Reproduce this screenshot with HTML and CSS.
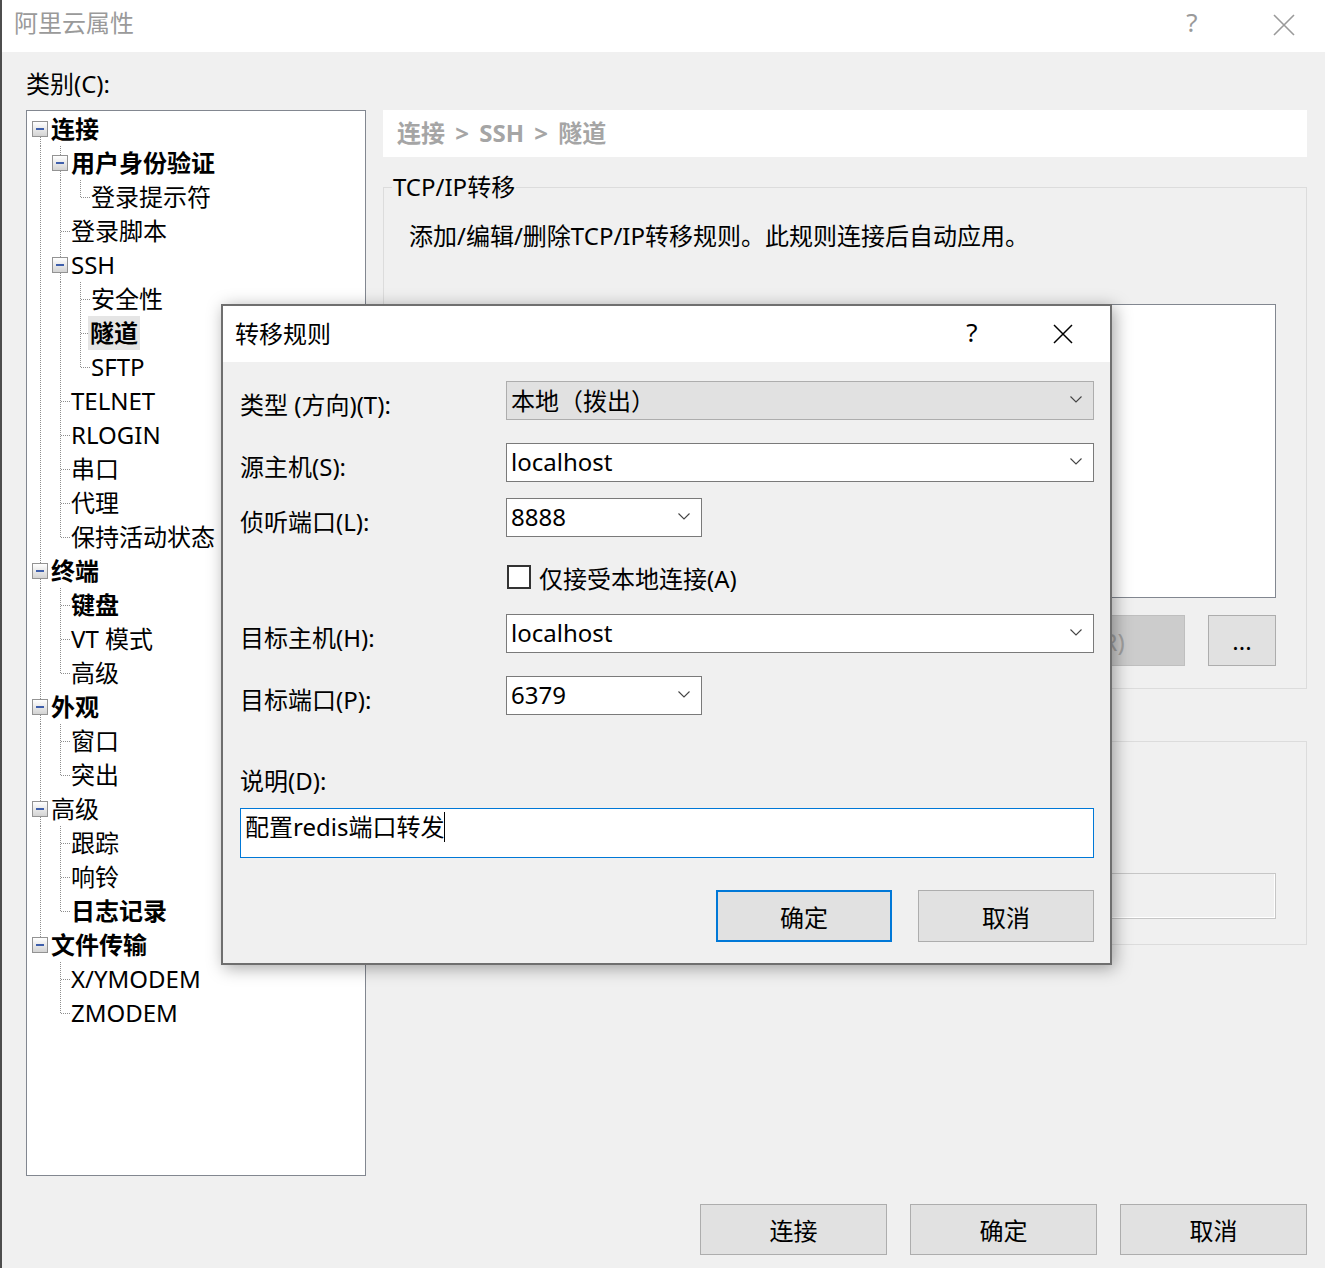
FILE: index.html
```html
<!DOCTYPE html>
<html lang="zh-CN">

<head>
    <meta charset="UTF-8">
    <meta name="viewport" content="width=device-width, initial-scale=1.0">
    <title>阿里云属性</title>
    <link rel="stylesheet" href="styles.css">
</head>

<body>
    <div class="window">
        <div class="titlebar">
            <span class="title">阿里云属性</span>
            <span class="tb-help">?</span>
            <span class="tb-close">
                <svg width="22" height="22" viewBox="0 0 22 22"><path d="M1 1L21 21M21 1L1 21" stroke="#9a9a9a" stroke-width="1.6" fill="none"/></svg>
            </span>
        </div>

        <div class="main">
            <div class="cat-label">类别(C):</div>
            <div class="columns">
                <!-- category tree -->
                <div class="tree">
                    <div class="row"><span class="g down"><i class="exp"></i></span><span class="label b">连接</span></div>
                    <div class="row"><span class="g v"></span><span class="g up down"><i class="exp"></i></span><span class="label b">用户身份验证</span></div>
                    <div class="row"><span class="g v"></span><span class="g v"></span><span class="g l"></span><span class="label">登录提示符</span></div>
                    <div class="row"><span class="g v"></span><span class="g t"></span><span class="label">登录脚本</span></div>
                    <div class="row"><span class="g v"></span><span class="g up down"><i class="exp"></i></span><span class="label">SSH</span></div>
                    <div class="row"><span class="g v"></span><span class="g v"></span><span class="g t"></span><span class="label">安全性</span></div>
                    <div class="row"><span class="g v"></span><span class="g v"></span><span class="g t"></span><span class="label b sel">隧道</span></div>
                    <div class="row"><span class="g v"></span><span class="g v"></span><span class="g l"></span><span class="label">SFTP</span></div>
                    <div class="row"><span class="g v"></span><span class="g t"></span><span class="label">TELNET</span></div>
                    <div class="row"><span class="g v"></span><span class="g t"></span><span class="label">RLOGIN</span></div>
                    <div class="row"><span class="g v"></span><span class="g t"></span><span class="label">串口</span></div>
                    <div class="row"><span class="g v"></span><span class="g t"></span><span class="label">代理</span></div>
                    <div class="row"><span class="g v"></span><span class="g l"></span><span class="label">保持活动状态</span></div>
                    <div class="row"><span class="g up down"><i class="exp"></i></span><span class="label b">终端</span></div>
                    <div class="row"><span class="g v"></span><span class="g t"></span><span class="label b">键盘</span></div>
                    <div class="row"><span class="g v"></span><span class="g t"></span><span class="label">VT 模式</span></div>
                    <div class="row"><span class="g v"></span><span class="g l"></span><span class="label">高级</span></div>
                    <div class="row"><span class="g up down"><i class="exp"></i></span><span class="label b">外观</span></div>
                    <div class="row"><span class="g v"></span><span class="g t"></span><span class="label">窗口</span></div>
                    <div class="row"><span class="g v"></span><span class="g l"></span><span class="label">突出</span></div>
                    <div class="row"><span class="g up down"><i class="exp"></i></span><span class="label">高级</span></div>
                    <div class="row"><span class="g v"></span><span class="g t"></span><span class="label">跟踪</span></div>
                    <div class="row"><span class="g v"></span><span class="g t"></span><span class="label">响铃</span></div>
                    <div class="row"><span class="g v"></span><span class="g l"></span><span class="label b">日志记录</span></div>
                    <div class="row"><span class="g up"><i class="exp"></i></span><span class="label b">文件传输</span></div>
                    <div class="row"><span class="g"></span><span class="g t"></span><span class="label">X/YMODEM</span></div>
                    <div class="row"><span class="g"></span><span class="g l"></span><span class="label">ZMODEM</span></div>
                </div>

                <!-- settings page -->
                <div class="panel">
                    <div class="crumb">连接 &gt; SSH &gt; 隧道</div>

                    <fieldset class="group">
                        <legend>TCP/IP转移</legend>
                        <div class="group-body">
                            <p class="desc">添加/编辑/删除TCP/IP转移规则。此规则连接后自动应用。</p>
                            <div class="listbox"></div>
                            <div class="list-buttons">
                                <button type="button" class="btn">添加(A)</button>
                                <button type="button" class="btn" disabled>编辑(E)</button>
                                <button type="button" class="btn" disabled>删除(R)</button>
                                <button type="button" class="btn btn-more">...</button>
                            </div>
                        </div>
                    </fieldset>

                    <fieldset class="group group-x11">
                        <legend>X11转移</legend>
                        <div class="group-body">
                            <div class="x11-input"></div>
                        </div>
                    </fieldset>
                </div>
            </div>

            <div class="footer">
                <button type="button" class="btn">连接</button>
                <button type="button" class="btn">确定</button>
                <button type="button" class="btn">取消</button>
            </div>
        </div>

        <!-- forwarding rule dialog -->
        <div class="dialog">
            <div class="dlg-title">
                <span class="dlg-name">转移规则</span>
                <span class="dlg-help">?</span>
                <span class="dlg-close">
                    <svg width="20" height="20" viewBox="0 0 20 20"><path d="M1 1L19 19M19 1L1 19" stroke="#000" stroke-width="1.5" fill="none"/></svg>
                </span>
            </div>
            <div class="dlg-body">
                <div class="field">
                    <span class="flabel">类型 (方向)(T):</span>
                    <div class="combo combo-ro"><span>本地（拨出）</span><svg class="chev" width="12" height="7" viewBox="0 0 12 7"><path d="M0.5 0.5L6 6L11.5 0.5" stroke="#444" stroke-width="1.1" fill="none"/></svg></div>
                </div>
                <div class="field">
                    <span class="flabel">源主机(S):</span>
                    <div class="combo"><span>localhost</span><svg class="chev" width="12" height="7" viewBox="0 0 12 7"><path d="M0.5 0.5L6 6L11.5 0.5" stroke="#444" stroke-width="1.1" fill="none"/></svg></div>
                </div>
                <div class="field field-port">
                    <span class="flabel">侦听端口(L):</span>
                    <div class="combo combo-short"><span>8888</span><svg class="chev" width="12" height="7" viewBox="0 0 12 7"><path d="M0.5 0.5L6 6L11.5 0.5" stroke="#444" stroke-width="1.1" fill="none"/></svg></div>
                </div>
                <div class="field field-check">
                    <span class="flabel"></span>
                    <span class="checkbox"></span>
                    <span class="check-text">仅接受本地连接(A)</span>
                </div>
                <div class="field field-after-check">
                    <span class="flabel">目标主机(H):</span>
                    <div class="combo"><span>localhost</span><svg class="chev" width="12" height="7" viewBox="0 0 12 7"><path d="M0.5 0.5L6 6L11.5 0.5" stroke="#444" stroke-width="1.1" fill="none"/></svg></div>
                </div>
                <div class="field">
                    <span class="flabel">目标端口(P):</span>
                    <div class="combo combo-short"><span>6379</span><svg class="chev" width="12" height="7" viewBox="0 0 12 7"><path d="M0.5 0.5L6 6L11.5 0.5" stroke="#444" stroke-width="1.1" fill="none"/></svg></div>
                </div>
                <div class="desc-label">说明(D):</div>
                <div class="desc-input"><span class="typed">配置redis端口转发</span></div>
                <div class="dlg-buttons">
                    <button type="button" class="btn btn-default">确定</button>
                    <button type="button" class="btn">取消</button>
                </div>
            </div>
        </div>
    </div>
</body>

</html>
```

FILE: styles.css
```css
:root {
    --vdot: repeating-linear-gradient(to bottom, #8e8e8e 0 1px, transparent 1px 2px);
    --hdot: repeating-linear-gradient(to right, #8e8e8e 0 1px, transparent 1px 2px);
}

body {
    margin: 0;
    background: #f0f0f0;
    font-family: "Noto Sans", "Noto Sans CJK SC", sans-serif;
    color: #000;
}

.window {
    position: relative;
    width: 1325px;
    height: 1268px;
    box-sizing: border-box;
    border-left: 2px solid #4d4d4d;
    background: #f0f0f0;
    overflow: hidden;
}

/* title bar */
.titlebar {
    display: flex;
    align-items: center;
    height: 52px;
    background: #fff;
}

.title {
    flex: 1;
    padding: 0 0 9px 12px;
    font-size: 24px;
    color: #9a9a9a;
}

.tb-help {
    width: 102px;
    text-align: center;
    font-size: 26px;
    color: #9a9a9a;
    padding-bottom: 8px;
}

.tb-close {
    width: 82px;
    display: flex;
    justify-content: center;
    padding-bottom: 3px;
}

.main {
    padding: 15px 18px 0 24px;
}

.cat-label {
    font-size: 24px;
    line-height: 34px;
    margin-bottom: 9px;
}

.columns {
    display: grid;
    grid-template-columns: 340px 1fr;
    column-gap: 17px;
    height: 1066px;
}

/* tree */
.tree {
    border: 1px solid #828790;
    background: #fff;
    padding: 1px 0 0 3px;
}

.row {
    display: flex;
    height: 34px;
}

.g {
    flex: none;
    width: 20px;
    height: 34px;
    display: flex;
    align-items: center;
}

.v {
    background: var(--vdot) 10px 0 / 1px 100% no-repeat;
}

.t {
    background: var(--hdot) 11px 17px / 9px 1px no-repeat, var(--vdot) 10px 0 / 1px 100% no-repeat;
}

.l {
    background: var(--hdot) 11px 17px / 9px 1px no-repeat, var(--vdot) 10px 0 / 1px 18px no-repeat;
}

.up {
    background: var(--vdot) 10px 0 / 1px 9px no-repeat;
}

.down {
    background: var(--vdot) 10px 25px / 1px 9px no-repeat;
}

.up.down {
    background: var(--vdot) 10px 0 / 1px 9px no-repeat, var(--vdot) 10px 25px / 1px 9px no-repeat;
}

.exp {
    width: 16px;
    height: 16px;
    margin-left: 2px;
    box-sizing: border-box;
    border: 1px solid #939393;
    background: linear-gradient(#3f5fab, #3f5fab) center / 8px 2px no-repeat, linear-gradient(#fff, #d3d3d3);
}

.label {
    font-size: 24px;
    line-height: 34px;
    padding-left: 1px;
    white-space: nowrap;
}

.b {
    font-weight: 700;
}

.sel {
    background: #e5e5e5;
    padding: 0 2px;
    margin-left: -2px;
}

/* right panel */
.panel {
    display: flex;
    flex-direction: column;
}

.crumb {
    height: 47px;
    line-height: 46px;
    background: #fff;
    padding-left: 14px;
    font-size: 24px;
    font-weight: 700;
    color: #a5a5a5;
    word-spacing: 4px;
}

.group {
    margin: 15px 0 0;
    padding: 0 30px 22px 8px;
    border: 1px solid #dcdcdc;
    min-width: 0;
}

.group legend {
    padding: 0 1px;
    font-size: 24px;
    line-height: 30px;
}

.group-body {
    padding-left: 17px;
}

.desc {
    margin: 19px 0 0;
    font-size: 24px;
    line-height: 30px;
}

.listbox {
    margin-top: 53px;
    height: 294px;
    box-sizing: border-box;
    border: 1px solid #828790;
    background: #fff;
}

.list-buttons {
    display: flex;
    justify-content: flex-end;
    gap: 23px;
    margin-top: 17px;
}

.btn {
    height: 51px;
    box-sizing: border-box;
    border: 1px solid #adadad;
    background: #e1e1e1;
    font-family: inherit;
    font-size: 24px;
    color: #000;
    padding: 0;
}

.btn:disabled {
    background: #cccccc;
    border-color: #bfbfbf;
    color: #a0a0a0;
}

.list-buttons .btn {
    width: 198px;
}

.list-buttons .btn-more {
    width: 68px;
}

.group-x11 {
    margin-top: 37px;
    padding-bottom: 25px;
}

.x11-input {
    margin: 117px 0 0 auto;
    width: 560px;
    height: 46px;
    box-sizing: border-box;
    border: 1px solid #c6c6c6;
    box-shadow: inset -1px -1px #fff;
    background: #f0f0f0;
}

.footer {
    display: flex;
    justify-content: flex-end;
    gap: 23px;
    margin-top: 28px;
}

.footer .btn {
    width: 187px;
}

/* dialog */
.dialog {
    position: absolute;
    left: 219px;
    top: 304px;
    width: 891px;
    height: 661px;
    box-sizing: border-box;
    border: 2px solid #6f6f6f;
    background: #f0f0f0;
    box-shadow: 3px 3px 16px rgba(0, 0, 0, 0.35);
}

.dlg-title {
    display: flex;
    align-items: center;
    height: 56px;
    background: #fff;
}

.dlg-name {
    flex: 1;
    padding: 0 0 3px 12px;
    font-size: 24px;
}

.dlg-help {
    width: 88px;
    text-align: center;
    font-size: 26px;
    padding-bottom: 4px;
}

.dlg-close {
    width: 94px;
    display: flex;
    justify-content: center;
}

.dlg-body {
    display: flex;
    flex-direction: column;
    padding: 19px 16px 0 17px;
}

.field {
    display: flex;
    align-items: center;
    height: 39px;
    margin-top: 23px;
}

.field:first-child {
    margin-top: 0;
}

.field-port {
    margin-top: 16px;
}

.field-check {
    height: 34px;
}

.field-after-check {
    margin-top: 20px;
}

.flabel {
    flex: none;
    width: 266px;
    font-size: 24px;
    padding-top: 5px;
}

.combo {
    flex: 1;
    height: 39px;
    box-sizing: border-box;
    border: 1px solid #7a7a7a;
    background: #fff;
    display: flex;
    align-items: center;
    justify-content: space-between;
    padding: 0 11px 2px 4px;
    font-size: 24px;
}

.combo-ro {
    background: #e1e1e1;
    border-color: #adadad;
}

.combo-short {
    flex: none;
    width: 196px;
}

.checkbox {
    width: 24px;
    height: 24px;
    box-sizing: border-box;
    border: 2px solid #333;
    background: #fff;
    margin: 0 8px 0 1px;
}

.check-text {
    font-size: 24px;
}

.desc-label {
    margin-top: 51px;
    font-size: 24px;
    line-height: 30px;
}

.desc-input {
    margin-top: 12px;
    height: 50px;
    box-sizing: border-box;
    border: 1px solid #0078d7;
    background: #fff;
    padding: 0 0 12px 4px;
    display: flex;
    align-items: center;
    font-size: 24px;
}

.typed {
    border-right: 1px solid #000;
    line-height: 30px;
}

.dlg-buttons {
    display: flex;
    justify-content: flex-end;
    gap: 26px;
    margin-top: 32px;
}

.dlg-buttons .btn {
    width: 176px;
    height: 52px;
}

.dlg-buttons .btn-default {
    border: 2px solid #0078d7;
}
```
